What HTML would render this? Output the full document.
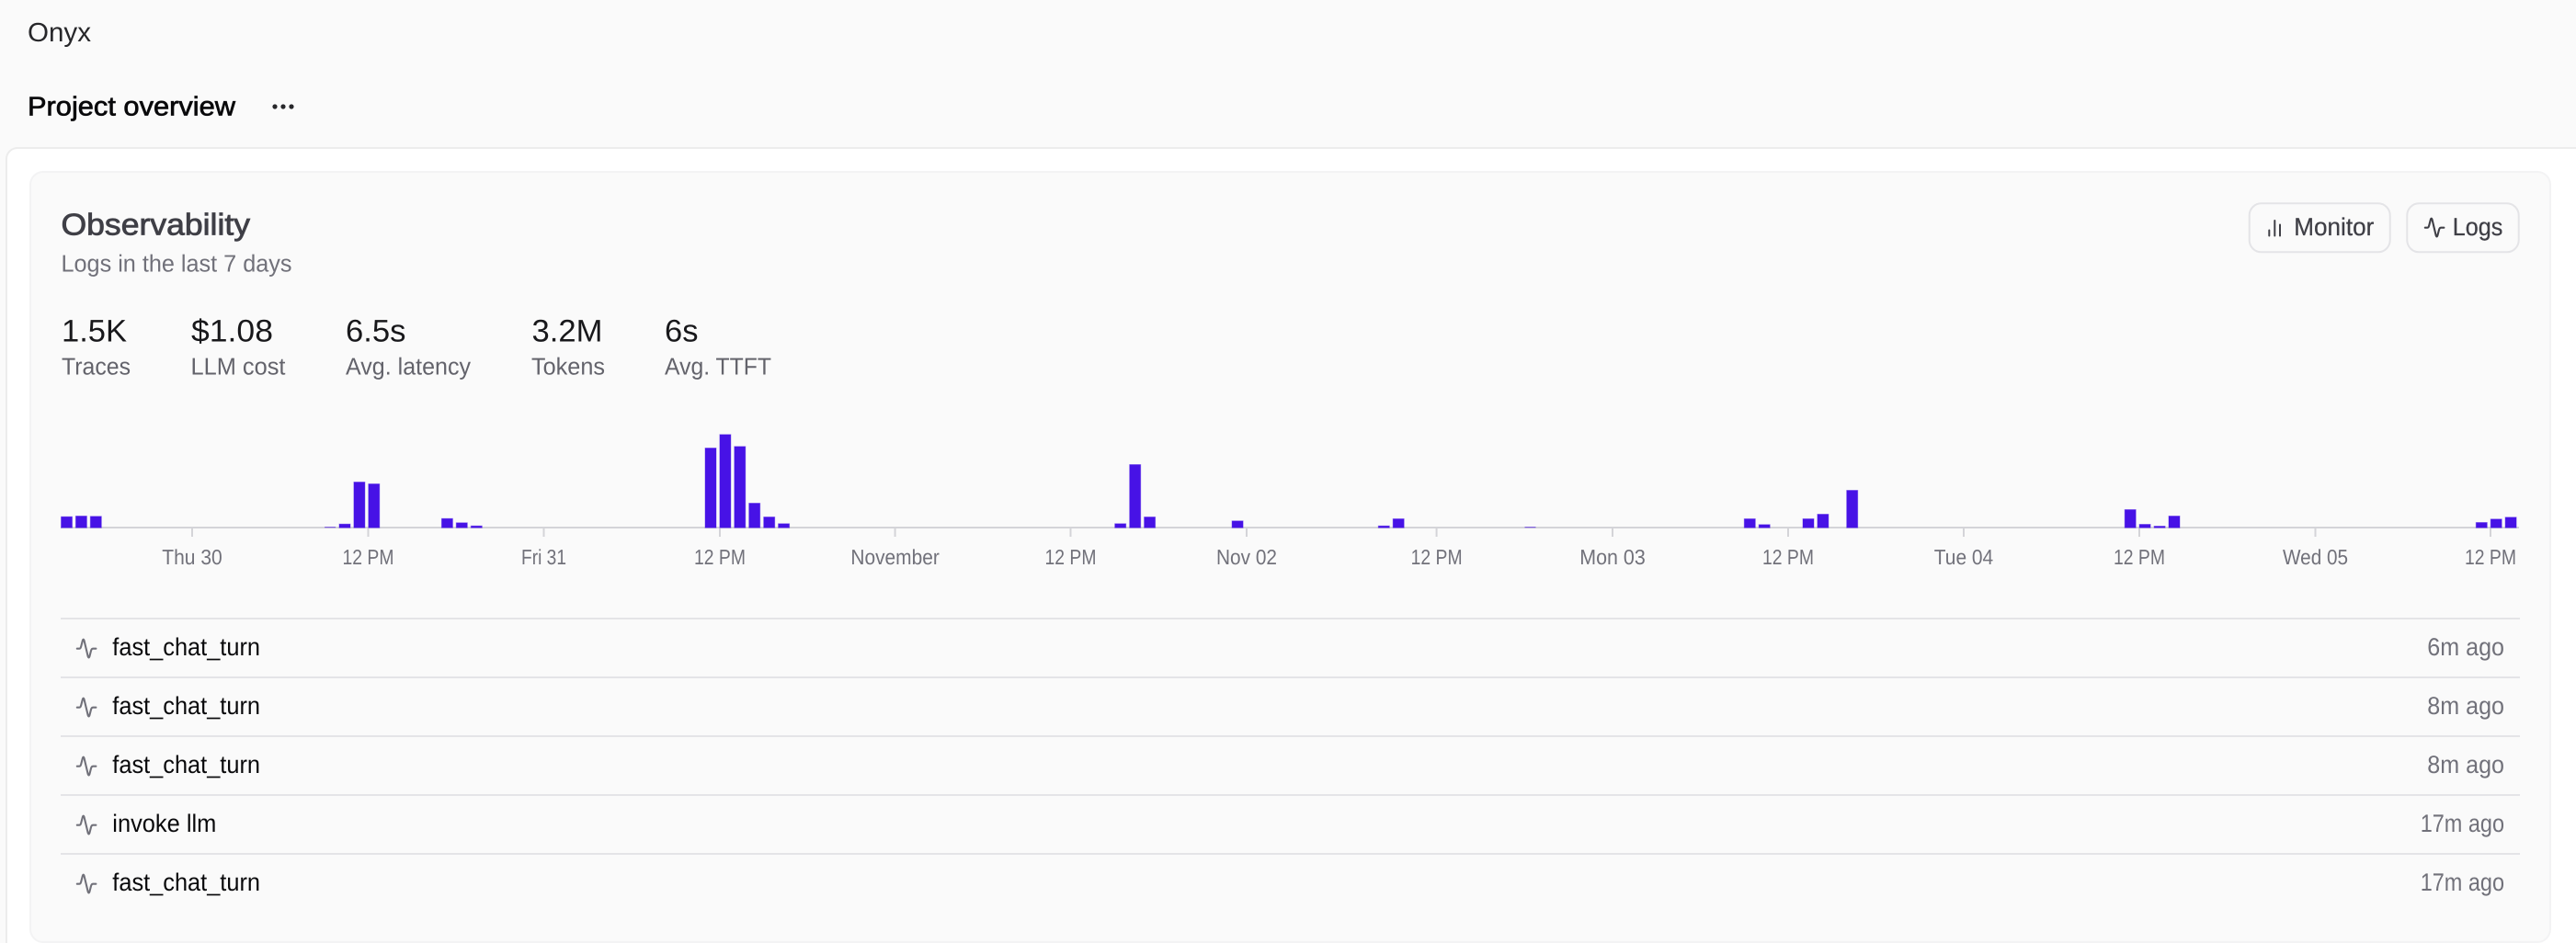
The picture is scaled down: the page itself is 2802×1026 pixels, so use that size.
<!DOCTYPE html>
<html lang="en">
<head>
<meta charset="utf-8">
<title>Onyx - Project overview</title>
<style>
html,body{margin:0;padding:0;width:2802px;height:1026px;overflow:hidden;background:#fafafa}
svg{display:block}
text{font-family:"Liberation Sans",Arial,sans-serif;text-rendering:geometricPrecision}
.tick{font-size:23px;fill:#71717a;text-anchor:middle}
.row{font-size:27px;fill:#09090b}
.ago{font-size:27px;fill:#71717a}
.val{font-size:34px;fill:#18181b}
.lab{font-size:26px;fill:#63636b}
.btn{font-size:27px;fill:#3f3f46;stroke:#3f3f46;stroke-width:.25}
.bars rect{fill:#4712e6;stroke:#4712e6;stroke-opacity:.4;stroke-width:1}
.ic{fill:none;stroke:#71717a;stroke-width:2.1;stroke-linecap:round;stroke-linejoin:round}
</style>
</head>
<body>
<svg width="2802" height="1026" viewBox="0 0 2802 1026" xmlns="http://www.w3.org/2000/svg">
<rect width="2802" height="1026" fill="#fafafa"/>

<text x="30" y="45" font-size="29" fill="#27272a" textLength="69" lengthAdjust="spacingAndGlyphs">Onyx</text>
<text x="30" y="125.5" font-size="29" fill="#09090b" stroke="#09090b" stroke-width=".7" textLength="226" lengthAdjust="spacingAndGlyphs">Project overview</text>
<circle cx="299" cy="116" r="2.6" fill="#27272a"/><circle cx="308" cy="116" r="2.6" fill="#27272a"/><circle cx="317" cy="116" r="2.6" fill="#27272a"/>

<!-- main panel -->
<path d="M7 1030V173a12 12 0 0 1 12-12H2810V1030Z" fill="#fff" stroke="#ececec" stroke-width="2"/>
<!-- card -->
<rect x="33" y="187" width="2741" height="838" rx="14" fill="#fafafa" stroke="#f3f3f4" stroke-width="2"/>

<text x="66.5" y="255.5" font-size="33" fill="#3f3f46" stroke="#3f3f46" stroke-width=".8" textLength="205.5" lengthAdjust="spacingAndGlyphs">Observability</text>
<text x="66.5" y="295.5" font-size="26" fill="#71717a" textLength="251" lengthAdjust="spacingAndGlyphs">Logs in the last 7 days</text>

<!-- buttons -->
<rect x="2446.7" y="221.3" width="153" height="53" rx="13" fill="#fafafa" stroke="#e4e4e7" stroke-width="2"/>
<g stroke="#3f3f46" stroke-width="2" stroke-linecap="round" fill="none">
<path d="M2468.3 250.5V256.5"/><path d="M2474.3 240V256.5"/><path d="M2480 244.5V256.5"/>
</g>
<text class="btn" x="2495.3" y="256" textLength="87" lengthAdjust="spacingAndGlyphs">Monitor</text>
<rect x="2618.3" y="221.3" width="121.4" height="53" rx="13" fill="#fafafa" stroke="#e4e4e7" stroke-width="2"/>
<g transform="translate(2554 -458)"><path class="ic" style="stroke:#3f3f46" d="M83.8 705.7H86.4Q87.6 705.7 88.2 703.4L89.9 696.8Q90.7 694.6 91.5 696.8L95.7 714.3Q96.6 716.6 97.4 714.3L99 708Q99.7 705.7 101 705.7H104.4"/></g>
<text class="btn" x="2667.7" y="256" textLength="54.6" lengthAdjust="spacingAndGlyphs">Logs</text>

<!-- stats -->
<text class="val" x="67" y="371.7" textLength="71" lengthAdjust="spacingAndGlyphs">1.5K</text>
<text class="val" x="208" y="371.7" textLength="89" lengthAdjust="spacingAndGlyphs">$1.08</text>
<text class="val" x="376" y="371.7" textLength="65.5" lengthAdjust="spacingAndGlyphs">6.5s</text>
<text class="val" x="578.5" y="371.7" textLength="77" lengthAdjust="spacingAndGlyphs">3.2M</text>
<text class="val" x="723" y="371.7" textLength="36.5" lengthAdjust="spacingAndGlyphs">6s</text>
<text class="lab" x="67" y="407.5" textLength="75" lengthAdjust="spacingAndGlyphs">Traces</text>
<text class="lab" x="207.5" y="407.5" textLength="103" lengthAdjust="spacingAndGlyphs">LLM cost</text>
<text class="lab" x="376" y="407.5" textLength="136" lengthAdjust="spacingAndGlyphs">Avg. latency</text>
<text class="lab" x="578" y="407.5" textLength="80" lengthAdjust="spacingAndGlyphs">Tokens</text>
<text class="lab" x="723" y="407.5" textLength="116" lengthAdjust="spacingAndGlyphs">Avg. TTFT</text>

<!-- chart ticks + axis -->
<g stroke="#d4d4d8" stroke-width="2">
<path d="M209 574V584M400.5 574V584M591.5 574V584M783 574V584M973.6 574V584M1164.5 574V584M1356 574V584M1562.6 574V584M1754 574V584M1945 574V584M2136 574V584M2327 574V584M2518.5 574V584M2709 574V584"/>
</g>
<rect x="66" y="573" width="2674" height="2" fill="#d4d4d8"/>

<!-- bars -->
<g class="bars">
<rect x="66.5" y="562.2" width="12" height="12"/>
<rect x="82.4" y="561.5" width="12" height="12.7"/>
<rect x="98.3" y="561.8" width="12" height="12.4"/>
<rect x="353.1" y="573.2" width="12" height="1" style="stroke:none;opacity:.7"/>
<rect x="369" y="570.2" width="12" height="4"/>
<rect x="384.9" y="524.5" width="12" height="49.7"/>
<rect x="400.8" y="526.5" width="12" height="47.7"/>
<rect x="480.4" y="564.2" width="12" height="10"/>
<rect x="496.3" y="568.8" width="12" height="5.4"/>
<rect x="512.3" y="572.2" width="12" height="2"/>
<rect x="767" y="487.5" width="12" height="86.7"/>
<rect x="782.9" y="472.8" width="12" height="101.4"/>
<rect x="798.8" y="485.8" width="12" height="88.4"/>
<rect x="814.7" y="547.5" width="12" height="26.7"/>
<rect x="830.7" y="562.5" width="12" height="11.7"/>
<rect x="846.6" y="569.8" width="12" height="4.4"/>
<rect x="1212.7" y="569.8" width="12" height="4.4"/>
<rect x="1228.7" y="505.5" width="12" height="68.7"/>
<rect x="1244.6" y="562.5" width="12" height="11.7"/>
<rect x="1340.1" y="566.8" width="12" height="7.4"/>
<rect x="1499.3" y="572.2" width="12" height="2"/>
<rect x="1515.2" y="564.5" width="12" height="9.7"/>
<rect x="1658.5" y="573.2" width="12" height="1" style="stroke:none;opacity:.7"/>
<rect x="1897.3" y="564.5" width="12" height="9.7"/>
<rect x="1913.2" y="570.8" width="12" height="3.4"/>
<rect x="1961" y="564.5" width="12" height="9.7"/>
<rect x="1976.9" y="559.5" width="12" height="14.7"/>
<rect x="2008.7" y="533.5" width="12" height="40.7"/>
<rect x="2311.2" y="554.5" width="12" height="19.7"/>
<rect x="2327.1" y="570.5" width="12" height="3.7"/>
<rect x="2343.1" y="572.5" width="12" height="1.7"/>
<rect x="2359" y="561.5" width="12" height="12.7"/>
<rect x="2693.3" y="568.5" width="12" height="5.7"/>
<rect x="2709.2" y="564.8" width="12" height="9.4"/>
<rect x="2725.1" y="562.8" width="12" height="11.4"/>
</g>

<!-- axis labels -->
<text class="tick" x="209" y="614" textLength="65.5" lengthAdjust="spacingAndGlyphs">Thu 30</text>
<text class="tick" x="400.5" y="614" textLength="56" lengthAdjust="spacingAndGlyphs">12 PM</text>
<text class="tick" x="591.5" y="614" textLength="49" lengthAdjust="spacingAndGlyphs">Fri 31</text>
<text class="tick" x="783" y="614" textLength="56" lengthAdjust="spacingAndGlyphs">12 PM</text>
<text class="tick" x="973.6" y="614" textLength="96.5" lengthAdjust="spacingAndGlyphs">November</text>
<text class="tick" x="1164.5" y="614" textLength="56" lengthAdjust="spacingAndGlyphs">12 PM</text>
<text class="tick" x="1356" y="614" textLength="66" lengthAdjust="spacingAndGlyphs">Nov 02</text>
<text class="tick" x="1562.6" y="614" textLength="56" lengthAdjust="spacingAndGlyphs">12 PM</text>
<text class="tick" x="1754" y="614" textLength="71.5" lengthAdjust="spacingAndGlyphs">Mon 03</text>
<text class="tick" x="1945" y="614" textLength="56" lengthAdjust="spacingAndGlyphs">12 PM</text>
<text class="tick" x="2136" y="614" textLength="64.4" lengthAdjust="spacingAndGlyphs">Tue 04</text>
<text class="tick" x="2327" y="614" textLength="56" lengthAdjust="spacingAndGlyphs">12 PM</text>
<text class="tick" x="2518.5" y="614" textLength="71" lengthAdjust="spacingAndGlyphs">Wed 05</text>
<text class="tick" x="2709" y="614" textLength="56" lengthAdjust="spacingAndGlyphs">12 PM</text>

<!-- list dividers -->
<g fill="#e4e4e7">
<rect x="66" y="672" width="2675" height="2"/>
<rect x="66" y="736" width="2675" height="2"/>
<rect x="66" y="800" width="2675" height="2"/>
<rect x="66" y="864" width="2675" height="2"/>
<rect x="66" y="928" width="2675" height="2"/>
</g>

<!-- list icons -->
<g>
<path class="ic" d="M83.8 705.7H86.4Q87.6 705.7 88.2 703.4L89.9 696.8Q90.7 694.6 91.5 696.8L95.7 714.3Q96.6 716.6 97.4 714.3L99 708Q99.7 705.7 101 705.7H104.4"/>
<path class="ic" transform="translate(0 64)" d="M83.8 705.7H86.4Q87.6 705.7 88.2 703.4L89.9 696.8Q90.7 694.6 91.5 696.8L95.7 714.3Q96.6 716.6 97.4 714.3L99 708Q99.7 705.7 101 705.7H104.4"/>
<path class="ic" transform="translate(0 128)" d="M83.8 705.7H86.4Q87.6 705.7 88.2 703.4L89.9 696.8Q90.7 694.6 91.5 696.8L95.7 714.3Q96.6 716.6 97.4 714.3L99 708Q99.7 705.7 101 705.7H104.4"/>
<path class="ic" transform="translate(0 192)" d="M83.8 705.7H86.4Q87.6 705.7 88.2 703.4L89.9 696.8Q90.7 694.6 91.5 696.8L95.7 714.3Q96.6 716.6 97.4 714.3L99 708Q99.7 705.7 101 705.7H104.4"/>
<path class="ic" transform="translate(0 256)" d="M83.8 705.7H86.4Q87.6 705.7 88.2 703.4L89.9 696.8Q90.7 694.6 91.5 696.8L95.7 714.3Q96.6 716.6 97.4 714.3L99 708Q99.7 705.7 101 705.7H104.4"/>
</g>

<!-- list text -->
<text class="row" x="122.3" y="713" textLength="160.7" lengthAdjust="spacingAndGlyphs">fast_chat_turn</text>
<text class="row" x="122.3" y="777" textLength="160.7" lengthAdjust="spacingAndGlyphs">fast_chat_turn</text>
<text class="row" x="122.3" y="841" textLength="160.7" lengthAdjust="spacingAndGlyphs">fast_chat_turn</text>
<text class="row" x="122.3" y="905" textLength="113" lengthAdjust="spacingAndGlyphs">invoke llm</text>
<text class="row" x="122.3" y="969" textLength="160.7" lengthAdjust="spacingAndGlyphs">fast_chat_turn</text>

<text class="ago" x="2640.3" y="713" textLength="83.7" lengthAdjust="spacingAndGlyphs">6m ago</text>
<text class="ago" x="2640.3" y="777" textLength="83.7" lengthAdjust="spacingAndGlyphs">8m ago</text>
<text class="ago" x="2640.3" y="841" textLength="83.7" lengthAdjust="spacingAndGlyphs">8m ago</text>
<text class="ago" x="2632.7" y="905" textLength="91.3" lengthAdjust="spacingAndGlyphs">17m ago</text>
<text class="ago" x="2632.7" y="969" textLength="91.3" lengthAdjust="spacingAndGlyphs">17m ago</text>
</svg>
</body>
</html>
